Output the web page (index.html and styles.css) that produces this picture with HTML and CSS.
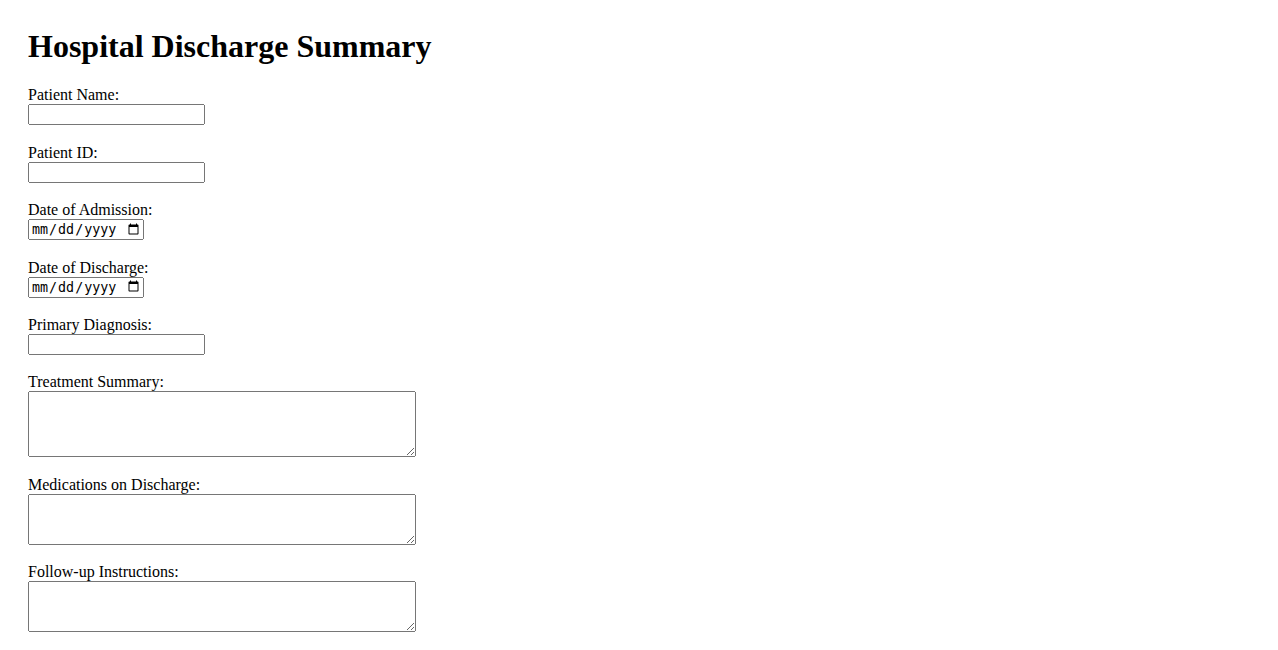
FILE: index.html
```html
<!DOCTYPE html>
<html lang="en">
<head>
    <meta charset="UTF-8">
    <meta name="viewport" content="width=device-width, initial-scale=1.0">
    <title>Hospital Discharge Summary</title>
    <link rel="stylesheet" href="styles.css">
</head>
<body>
    <div class="page">
        <h1>Hospital Discharge Summary</h1>
        <form id="dischargeForm" class="discharge-form">
            <div class="field">
                <label for="patientName">Patient Name:</label>
                <input type="text" id="patientName" name="patientName" class="text-input">
            </div>
            <div class="field">
                <label for="patientId">Patient ID:</label>
                <input type="text" id="patientId" name="patientId" class="text-input">
            </div>
            <div class="field">
                <label for="admissionDate">Date of Admission:</label>
                <input type="date" id="admissionDate" name="admissionDate" class="date-input">
            </div>
            <div class="field">
                <label for="dischargeDate">Date of Discharge:</label>
                <input type="date" id="dischargeDate" name="dischargeDate" class="date-input">
            </div>
            <div class="field">
                <label for="diagnosis">Primary Diagnosis:</label>
                <input type="text" id="diagnosis" name="diagnosis" class="text-input">
            </div>
            <div class="field">
                <label for="treatment">Treatment Summary:</label>
                <textarea id="treatment" name="treatment" class="notes notes-tall"></textarea>
            </div>
            <div class="field">
                <label for="medications">Medications on Discharge:</label>
                <textarea id="medications" name="medications" class="notes"></textarea>
            </div>
            <div class="field">
                <label for="followUp">Follow-up Instructions:</label>
                <textarea id="followUp" name="followUp" class="notes"></textarea>
            </div>
        </form>
    </div>
</body>
</html>
```

FILE: styles.css
```css
body {
    margin: 8px;
    font-family: "Liberation Serif", "Times New Roman", serif;
    font-size: 16px;
    color: #000;
    background-color: #fff;
}
.page {
    padding: 20px;
}
h1 {
    font-size: 32px;
    margin: 0 0 0.67em;
}
.discharge-form {
    display: flex;
    flex-direction: column;
    gap: 18.4px;
}
.field {
    display: flex;
    flex-direction: column;
    align-items: flex-start;
}
label {
    display: block;
}
.text-input {
    width: 177px;
    height: 21px;
    box-sizing: border-box;
    margin: 0;
}
.date-input {
    width: 116px;
    height: 21px;
    box-sizing: border-box;
    margin: 0;
}
.notes {
    width: 388px;
    height: 51px;
    box-sizing: border-box;
    margin: 0;
}
.notes-tall {
    height: 66px;
}
```
